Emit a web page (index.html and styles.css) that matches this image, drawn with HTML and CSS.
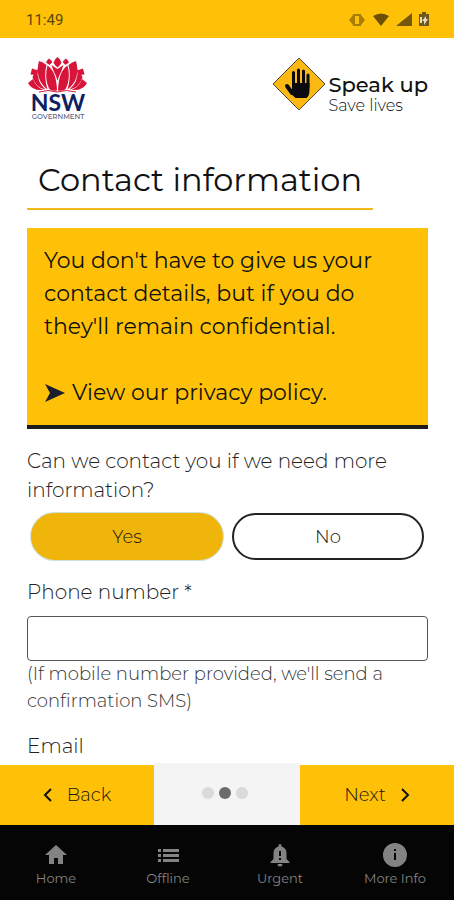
FILE: index.html
```html
<!DOCTYPE html>
<html lang="en">
<head>
<meta charset="utf-8">
<meta name="viewport" content="width=device-width, initial-scale=1">
<title>Speak up Save lives</title>
<link rel="stylesheet" href="styles.css">
</head>
<body>
<div class="app">
  <div class="status">
    <span>11:49</span>
    <div class="status-icons">
      <svg width="18" height="16" viewBox="0 0 18 16"><path d="M6 3h6v10H6z" fill="none" stroke="#a87d08" stroke-width="2"/><path d="M5 3 1 8l4 5zM13 3l4 5-4 5z" fill="#a87d08"/></svg>
      <svg width="18" height="16" viewBox="0 0 18 16"><path d="M1 4q8-5 16 0L9 14z" fill="#6b4f04"/></svg>
      <svg width="16" height="16" viewBox="0 0 16 16"><path d="M16 1v13H0z" fill="#745707"/></svg>
      <svg width="12" height="16" viewBox="0 0 12 16"><path d="M1 2h3V0h4v2h3v12H1z" fill="#6f5720"/><path d="M2 5h2v6H2zM8 4l-4 5h2v4l4-6H8z" fill="#e8dcc0"/></svg>
    </div>
  </div>

  <main class="content">
    <header class="brands">
      <div class="nsw">
        <svg class="lotus" viewBox="0 0 60 36" aria-hidden="true">
          <g fill="#d7153a">
            <path d="M29.500 0q3 2 4 5.500-1 3-4 5-3-2-4-5 1-3.500 4-5.500z"/>
            <path d="M21 1.500q3 2 3 4l-2.500 2.500-3.500-2.500q1-2.500 3-4zM38 1.500q-3 2-3 4l2.500 2.500L41 5.500q-1-2.500-3-4z"/>
            <path d="M4 11.500 10 13.500 8.500 18 2.500 17.500zM55 11.500 49 13.500l1.500 4.500 6-.5z"/>
            <path d="M11 4q4 1 7.500 4-3 11 1 24.500Q6 22 11 4zM48 4q-4 1-7.500 4 3 11-1 24.500Q53 22 48 4z"/>
            <path d="M19.500 8.500q9 6 9.500 25-6 1-8-2-5-11-1.500-23zM39.500 8.500q-9 6-9.500 25 6 1 8-2 5-11 1.500-23z"/>
            <path d="M23.500 8l6 4 6-4-2.500 7q-2 3-3.500 9-1.500-6-3.500-9z"/>
            <path d="M9.500 12q-1 13 8 20.500Q8 31 4.500 20.500 6 15 9.500 12zM49.500 12q1 13-8 20.500Q51 31 54.500 20.500 53 15 49.500 12z"/>
            <path d="M0 26l5-4q3 8 10.500 11Q4 34 0 26zM59 26l-5-4q-3 8-10.500 11Q55 34 59 26z"/>
          </g>
          <path d="M11 35q9-3 18 0 9-3 19 0" fill="none" stroke="#d7153a"/>
        </svg>
        <span class="nsw-name">NSW</span>
        <span class="nsw-sub">GOVERNMENT</span>
      </div>
      <div class="speak">
        <svg class="sign" viewBox="0 0 54 54" aria-hidden="true">
          <path d="M27 1 53 27 27 53 1 27z" fill="#fdb913" stroke="#4d4630"/>
          <g stroke="#0b0b0f" stroke-width="3" stroke-linecap="round" fill="none">
            <path d="M21.500 29V15.500M26.500 28V13M31.500 28V14M36 30V18"/>
            <path d="M20 36l-5-7" stroke-width="4"/>
          </g>
          <path d="M20 26h17.500v7q0 6-3 8h-11q-4-3-6-8l2.500-1z" fill="#0b0b0f"/>
        </svg>
        <div class="speak-text">
          <span class="speak-name">Speak up</span>
          <span class="speak-sub">Save lives</span>
        </div>
      </div>
    </header>

    <h1>Contact information</h1>

    <section class="notice">
      <p>You don't have to give us your contact details, but if you do they'll remain confidential.</p>
      <a href="#privacy"><svg width="22" height="20" viewBox="0 0 22 20" aria-hidden="true"><path d="M1 1 21 10 1 19 6 10z" fill="#1b1e2c"/></svg>View our privacy policy.</a>
    </section>

    <form>
      <p class="label" id="ask">Can we contact you if we need more information?</p>
      <div class="choices" role="group" aria-labelledby="ask">
        <button type="button" class="choice selected" aria-pressed="true">Yes</button>
        <button type="button" class="choice" aria-pressed="false">No</button>
      </div>
      <label class="label" for="phone">Phone number *</label>
      <input id="phone" type="tel" aria-describedby="phone-hint">
      <p class="hint" id="phone-hint">(If mobile number provided, we'll send a confirmation SMS)</p>
      <label class="label" for="email">Email</label>
      <input id="email" type="email">
    </form>
  </main>

  <div class="pager">
    <button type="button" class="step"><svg width="10" height="14" viewBox="0 0 10 14" aria-hidden="true"><path d="M8 1 2 7l6 6"/></svg>Back</button>
    <div class="dots"><i></i><i class="on"></i><i></i></div>
    <button type="button" class="step">Next<svg width="10" height="14" viewBox="0 0 10 14" aria-hidden="true"><path d="M2 1l6 6-6 6"/></svg></button>
  </div>

  <nav class="tabs">
    <a href="#home"><svg viewBox="0 0 24 24" aria-hidden="true"><path d="M10 21v-6h4v6h5v-9h4L12 2 1 12h4v9z"/></svg>Home</a>
    <a href="#offline"><svg viewBox="0 0 24 24" aria-hidden="true"><path d="M2 6h3v3H2zM2 11h3v3H2zM2 16h3v3H2zM7 6h16v3H7zM7 11h16v3H7zM7 16h16v3H7z"/></svg>Offline</a>
    <a href="#urgent"><svg viewBox="0 0 24 24" aria-hidden="true"><path fill-rule="evenodd" d="M12 1a1.500 1.500 0 0 0-1.500 1.500v1Q5.500 5 5.500 10v6l-3 3v1h19v-1l-3-3v-6q0-5-5-6.500v-1A1.500 1.500 0 0 0 12 1zM11 8h2v5h-2zM11 15h2v2h-2zM9.500 21h5a2.500 2.500 0 0 1-5 0z"/></svg>Urgent</a>
    <a href="#more"><svg viewBox="0 0 24 24" aria-hidden="true"><path fill-rule="evenodd" d="M12 0a12 12 0 1 0 0 24 12 12 0 0 0 0-24zM11 6h2v2h-2zM11 10h2v7h-2z"/></svg>More Info</a>
  </nav>
</div>
</body>
</html>
```
FILE: styles.css
```css
* { box-sizing: border-box; }

body {
  margin: 0;
  font-family: Montserrat, Inter, "Open Sans", sans-serif;
  color: #111;
  background: #fff;
}

h1, p { margin: 0; font-weight: inherit; }
a { color: inherit; text-decoration: none; }
button, input { font: inherit; color: inherit; }

.app {
  display: flex;
  flex-direction: column;
  height: 100vh;
}

.status {
  display: flex;
  align-items: center;
  justify-content: space-between;
  flex: none;
  height: 38px;
  padding: 2px 24px 0 26px;
  font-family: Roboto, sans-serif;
  font-size: 15px;
  color: #5c4503;
  background: #ffc107;
}

.status-icons { display: flex; gap: 6px; }

.content {
  flex: 1;
  min-height: 0;
  overflow: hidden;
  padding: 19px 26px 0 27px;
}

.brands {
  display: flex;
  justify-content: space-between;
}

.nsw {
  display: flex;
  flex-direction: column;
  align-items: center;
  width: 62px;
  color: #0c2161;
}

.lotus { display: block; width: 60px; height: 36px; }
.nsw-name { font-family: Lato, sans-serif; font-size: 23px; line-height: 19px; font-weight: 700; }
.nsw-sub { font-size: 7px; line-height: 9px; font-weight: 500; color: #545b7c; }

.speak { display: flex; gap: 2px; }
.sign { display: block; width: 54px; height: 54px; }
.speak-text { display: flex; flex-direction: column; padding-top: 16px; }
.speak-name { font-size: 21px; line-height: 24px; font-weight: 500; }
.speak-sub { font-size: 16px; line-height: 18px; font-weight: 300; }

h1 {
  width: fit-content;
  margin-top: 37px;
  padding: 0 11px 6px;
  border-bottom: 2px solid #f5b81c;
  font-size: 32px;
  line-height: 44px;
  font-weight: 400;
}

.notice {
  margin-top: 18px;
  padding: 16px 17px;
  border-bottom: 4px solid #1c1a1a;
  font-size: 22px;
  line-height: 33px;
  background: #ffc107;
}

.notice a {
  display: flex;
  align-items: center;
  gap: 6px;
  margin-top: 33px;
}

.label {
  display: block;
  font-size: 20px;
  line-height: 29px;
  font-weight: 300;
  color: #222;
}

form { padding-top: 18px; }

.choices {
  display: flex;
  gap: 9px;
  padding: 8px 4px 18px;
}

.choice {
  flex: 1;
  height: 47px;
  border: 2px solid #222;
  border-radius: 24px;
  font-size: 18px;
  font-weight: 300;
  background: #fff;
}

.choice.selected {
  border-color: #f0b50a;
  background: #f0b50a;
  box-shadow: 0 0 0 1px #cfe0dc;
}

input {
  display: block;
  width: 100%;
  height: 45px;
  margin-top: 9px;
  padding: 0 12px;
  border: 1px solid #555;
  border-radius: 4px;
  background: #fff;
}

.hint {
  margin-bottom: 17px;
  font-size: 18px;
  line-height: 27px;
  font-weight: 300;
  color: #333;
}

.pager {
  display: flex;
  align-items: flex-end;
  flex: none;
}

.step {
  display: flex;
  align-items: center;
  justify-content: center;
  gap: 14px;
  flex: 1;
  height: 60px;
  border: 0;
  font-size: 18px;
  font-weight: 300;
  background: #ffc107;
}

.step path { fill: none; stroke: #111; stroke-width: 2; }

.dots {
  display: flex;
  align-items: center;
  justify-content: center;
  gap: 5px;
  width: 146px;
  height: 62px;
  padding: 0 5px 2px 0;
  background: #f4f4f4;
}

.dots i {
  width: 12px;
  height: 12px;
  border-radius: 50%;
  background: #dadada;
}

.dots .on { background: #6c6c6c; }

.tabs {
  display: grid;
  grid-template-columns: repeat(3, 1fr) 118px;
  flex: none;
  height: 75px;
  padding-top: 18px;
  font-size: 13px;
  line-height: 20px;
  color: #838383;
  background: #050505;
}

.tabs a {
  display: flex;
  flex-direction: column;
  align-items: center;
  gap: 1px;
}

.tabs svg { width: 24px; height: 24px; fill: #838383; }
```
